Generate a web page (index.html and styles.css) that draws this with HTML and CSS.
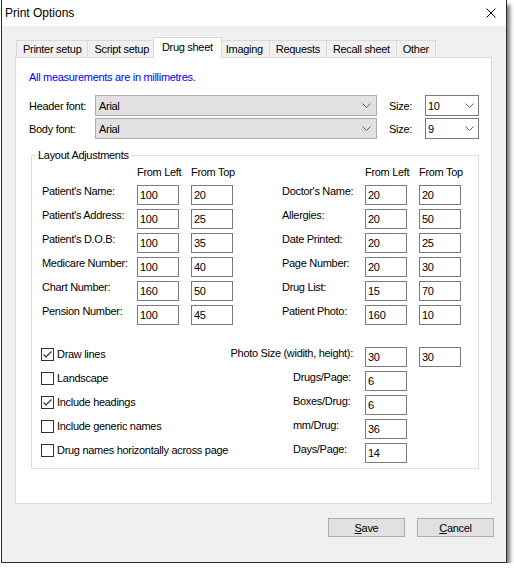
FILE: index.html
```html
<!DOCTYPE html>
<html>
<head>
<meta charset="utf-8">
<title>Print Options</title>
<link rel="stylesheet" href="styles.css">
</head>
<body>
<div class="window">
  <div class="titlebar">
    <span class="title">Print Options</span>
    <svg class="close" viewBox="0 0 10 10" width="10" height="10"><path d="M0.5 0.5 L9.5 9.5 M9.5 0.5 L0.5 9.5" stroke="#000" stroke-width="1" fill="none"/></svg>
  </div>
  <div class="body">
    <div class="tabs">
      <div class="tab">Printer setup</div>
      <div class="tab">Script setup</div>
      <div class="tab active">Drug sheet</div>
      <div class="tab">Imaging</div>
      <div class="tab">Requests</div>
      <div class="tab">Recall sheet</div>
      <div class="tab">Other</div>
    </div>
    <div class="panel">
      <p class="note">All measurements are in millimetres.</p>
      <div class="font-row first">
        <span class="lbl-font">Header font:</span>
        <div class="combo combo-font"><span>Arial</span><svg class="chev" viewBox="0 0 9 5" width="9" height="5"><polyline points="0.5,0.5 4.5,4.5 8.5,0.5" fill="none" stroke="#606060" stroke-width="1"/></svg></div>
        <span class="lbl-size">Size:</span>
        <div class="combo combo-size"><span>10</span><svg class="chev" viewBox="0 0 9 5" width="9" height="5"><polyline points="0.5,0.5 4.5,4.5 8.5,0.5" fill="none" stroke="#606060" stroke-width="1"/></svg></div>
      </div>
      <div class="font-row">
        <span class="lbl-font">Body font:</span>
        <div class="combo combo-font"><span>Arial</span><svg class="chev" viewBox="0 0 9 5" width="9" height="5"><polyline points="0.5,0.5 4.5,4.5 8.5,0.5" fill="none" stroke="#606060" stroke-width="1"/></svg></div>
        <span class="lbl-size">Size:</span>
        <div class="combo combo-size"><span>9</span><svg class="chev" viewBox="0 0 9 5" width="9" height="5"><polyline points="0.5,0.5 4.5,4.5 8.5,0.5" fill="none" stroke="#606060" stroke-width="1"/></svg></div>
      </div>

      <fieldset class="group">
        <legend>Layout Adjustments</legend>
        <div class="group-inner">
          <div class="positions">
            <div class="pos-grid pos-left">
              <span></span><span class="colhead">From Left</span><span class="colhead">From Top</span>
              <span class="lbl">Patient's Name:</span><input class="field" value="100"><input class="field" value="20">
              <span class="lbl">Patient's Address:</span><input class="field" value="100"><input class="field" value="25">
              <span class="lbl">Patient's D.O.B:</span><input class="field" value="100"><input class="field" value="35">
              <span class="lbl">Medicare Number:</span><input class="field" value="100"><input class="field" value="40">
              <span class="lbl">Chart Number:</span><input class="field" value="160"><input class="field" value="50">
              <span class="lbl">Pension Number:</span><input class="field" value="100"><input class="field" value="45">
            </div>
            <div class="pos-grid pos-right">
              <span></span><span class="colhead">From Left</span><span class="colhead">From Top</span>
              <span class="lbl">Doctor's Name:</span><input class="field" value="20"><input class="field" value="20">
              <span class="lbl">Allergies:</span><input class="field" value="20"><input class="field" value="50">
              <span class="lbl">Date Printed:</span><input class="field" value="20"><input class="field" value="25">
              <span class="lbl">Page Number:</span><input class="field" value="20"><input class="field" value="30">
              <span class="lbl">Drug List:</span><input class="field" value="15"><input class="field" value="70">
              <span class="lbl">Patient Photo:</span><input class="field" value="160"><input class="field" value="10">
            </div>
          </div>

          <div class="options">
            <div class="checks">
              <label class="check"><span class="box"><svg viewBox="0 0 11 11" width="11" height="11"><polyline points="1.5,5.5 4,8 9.5,2.5" fill="none" stroke="#333" stroke-width="1.1"/></svg></span>Draw lines</label>
              <label class="check"><span class="box"></span>Landscape</label>
              <label class="check"><span class="box"><svg viewBox="0 0 11 11" width="11" height="11"><polyline points="1.5,5.5 4,8 9.5,2.5" fill="none" stroke="#333" stroke-width="1.1"/></svg></span>Include headings</label>
              <label class="check"><span class="box"></span>Include generic names</label>
              <label class="check"><span class="box"></span>Drug names horizontally across page</label>
            </div>
            <div class="sizes">
              <span class="lbl photo">Photo Size (widith, height):</span><input class="field" value="30"><input class="field" value="30">
              <span class="lbl">Drugs/Page:</span><input class="field" value="6"><span></span>
              <span class="lbl">Boxes/Drug:</span><input class="field" value="6"><span></span>
              <span class="lbl">mm/Drug:</span><input class="field" value="36"><span></span>
              <span class="lbl">Days/Page:</span><input class="field" value="14"><span></span>
            </div>
          </div>
        </div>
      </fieldset>
    </div>
    <div class="buttons">
      <button class="btn"><u>S</u>ave</button>
      <button class="btn"><u>C</u>ancel</button>
    </div>
  </div>
</div>
</body>
</html>
```

FILE: styles.css
```css
* { box-sizing: border-box; }

body {
  margin: 0;
  background: #ffffff;
  font-family: "Liberation Sans", Arial, sans-serif;
  font-size: 11px;
  letter-spacing: -0.3px;
  color: #000;
}

.window {
  margin-left: 1px;
  width: 506px;
  border: 1px solid #2b2b2b;
  border-top: none;
  background: #f0f0f0;
  box-shadow: 4px 4px 4px -1px rgba(0, 0, 0, 0.55);
}

.titlebar {
  height: 26px;
  background: #fff;
  display: flex;
  align-items: center;
  justify-content: space-between;
  padding: 0 10px 0 3px;
}

.title {
  font-size: 12px;
  letter-spacing: 0;
}

.close { display: block; }

.body {
  padding: 11px 14px 25px 13px;
}

.tabs {
  display: flex;
  align-items: flex-end;
  padding-left: 1px;
}

.tab {
  height: 17px;
  line-height: 16px;
  padding: 0 6px;
  border: 1px solid #d9d9d9;
  border-bottom: none;
  margin-left: -1px;
  white-space: nowrap;
  background: #f0f0f0;
}

.tab:first-child { margin-left: 0; }

.tab.active {
  height: 21px;
  line-height: 18px;
  padding: 0 8px;
  margin: 0 -2px -1px -3px;
  background: #fff;
  position: relative;
  z-index: 1;
}

.panel {
  background: #fff;
  border: 1px solid #d9d9d9;
  padding: 13px 12px 34px 13px;
}

.note {
  margin: 0;
  color: #0000ff;
  line-height: 13px;
}

.font-row {
  display: flex;
  align-items: center;
  height: 21px;
  margin-top: 2px;
}

.font-row.first { margin-top: 11px; }

.lbl-font { width: 66px; }

.combo {
  height: 21px;
  display: flex;
  align-items: center;
  justify-content: space-between;
  border: 1px solid;
}

.combo-font {
  width: 282px;
  background: #e1e1e1;
  border-color: #adadad;
  padding: 0 5px 0 3px;
}

.lbl-size {
  width: 36px;
  margin-left: 12px;
}

.combo-size {
  width: 54px;
  background: #fff;
  border-color: #7a7a7a;
  padding: 0 4px 0 2px;
}

.chev { display: block; }

.group {
  margin: 10px 0 0 2px;
  padding: 0 0 5px 0;
  border: 1px solid #dcdcdc;
  width: 448px;
  min-width: 0;
}

.group legend {
  padding: 0 2px;
  margin-left: 4px;
  line-height: 13px;
}

.group-inner { padding-left: 9px; }

.positions {
  display: flex;
  gap: 49px;
  margin: 4px 0 0 1px;
}

.pos-grid {
  display: grid;
  grid-template-rows: 15px repeat(6, 20px);
  row-gap: 4px;
  column-gap: 12px;
}

.pos-left { grid-template-columns: 83px 42px 42px; }
.pos-right { grid-template-columns: 71px 42px 42px; }

.colhead, .lbl {
  line-height: 13px;
  white-space: nowrap;
  align-self: start;
}

.field {
  width: 42px;
  height: 20px;
  margin: 0;
  border: 1px solid #7a7a7a;
  padding: 0 2px;
  font: inherit;
  letter-spacing: inherit;
  color: #000;
  background: #fff;
  outline: none;
}

.options {
  display: flex;
  margin-top: 22px;
}

.checks {
  width: 188px;
  display: flex;
  flex-direction: column;
  gap: 11px;
  margin-top: 1px;
}

.check {
  display: flex;
  align-items: center;
  gap: 3px;
  height: 13px;
  line-height: 13px;
  white-space: nowrap;
}

.box {
  width: 13px;
  height: 13px;
  border: 1px solid #333;
  background: #fff;
  flex: none;
}

.box svg { display: block; }

.sizes {
  display: grid;
  grid-template-columns: 124px 42px 42px;
  grid-template-rows: repeat(5, 20px);
  row-gap: 4px;
  column-gap: 12px;
}

.sizes .lbl { padding-left: 64px; }

.sizes .lbl.photo {
  padding-left: 0;
  justify-self: end;
}

.buttons {
  display: flex;
  justify-content: flex-end;
  gap: 12px;
  margin: 14px -2px 0 0;
}

.btn {
  width: 77px;
  height: 19px;
  background: #e1e1e1;
  border: 1px solid #adadad;
  padding: 0;
  font: inherit;
  letter-spacing: inherit;
  color: #000;
}
```
